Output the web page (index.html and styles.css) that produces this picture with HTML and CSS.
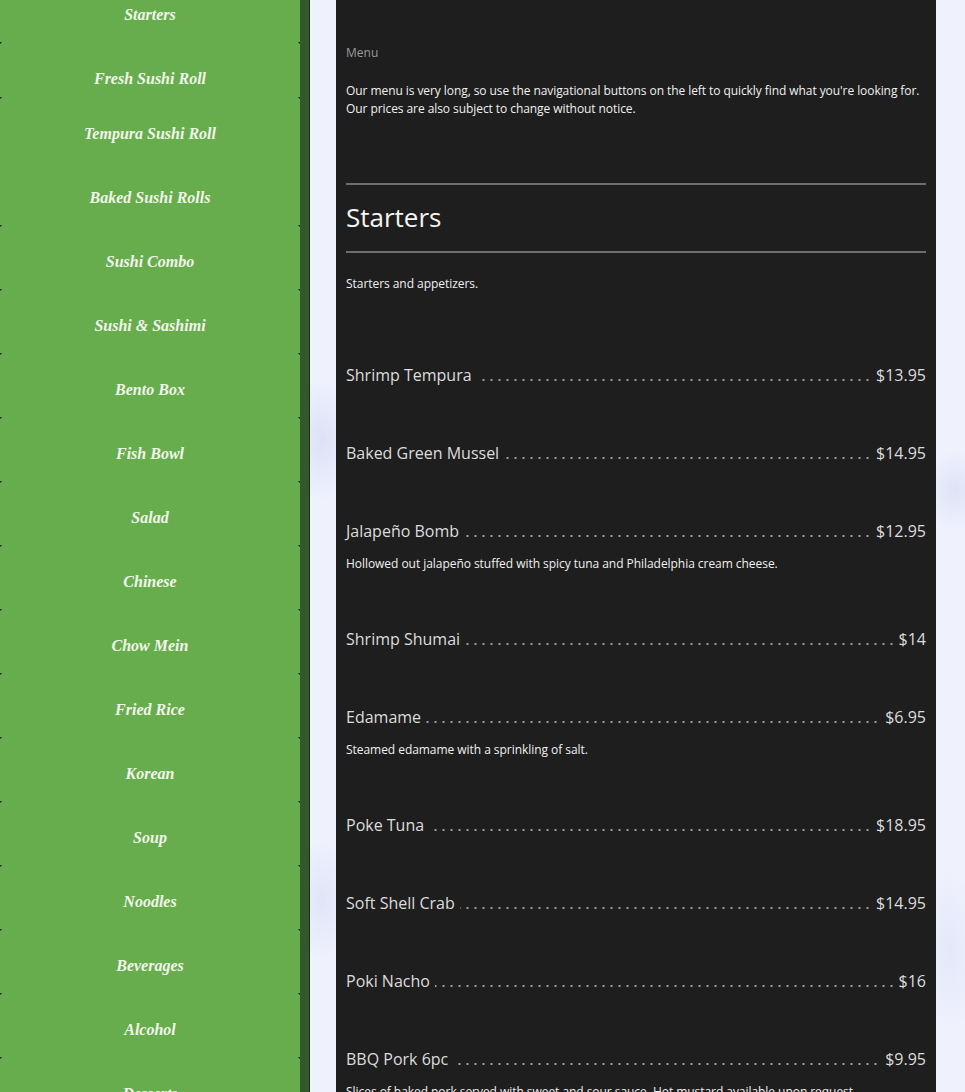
FILE: index.html
```html
<!DOCTYPE html>
<html lang="en">
<head>
<meta charset="utf-8">
<title>Menu</title>
<link rel="stylesheet" href="styles.css">
</head>
<body>
<div class="page">
  <nav class="sidebar">
    <a class="nav-item nav-first sep" href="#">Starters</a>
    <a class="nav-item nav-short sep" href="#">Fresh Sushi Roll</a>
    <a class="nav-item" href="#">Tempura Sushi Roll</a>
    <a class="nav-item sep" href="#">Baked Sushi Rolls</a>
    <a class="nav-item sep" href="#">Sushi Combo</a>
    <a class="nav-item sep" href="#">Sushi &amp; Sashimi</a>
    <a class="nav-item sep" href="#">Bento Box</a>
    <a class="nav-item sep" href="#">Fish Bowl</a>
    <a class="nav-item sep" href="#">Salad</a>
    <a class="nav-item sep" href="#">Chinese</a>
    <a class="nav-item sep" href="#">Chow Mein</a>
    <a class="nav-item sep" href="#">Fried Rice</a>
    <a class="nav-item sep" href="#">Korean</a>
    <a class="nav-item sep" href="#">Soup</a>
    <a class="nav-item sep" href="#">Noodles</a>
    <a class="nav-item sep" href="#">Beverages</a>
    <a class="nav-item sep" href="#">Alcohol</a>
    <a class="nav-item sep" href="#">Desserts</a>
  </nav>
  <div class="strip"></div>
  <main class="main">
    <section class="panel">
      <p class="crumb">Menu</p>
      <p class="intro">Our menu is very long, so use the navigational buttons on the left to quickly find what you're looking for.<br>Our prices are also subject to change without notice.</p>
      <hr class="rule rule-top">
      <h2 class="section-title">Starters</h2>
      <hr class="rule">
      <p class="section-desc">Starters and appetizers.</p>
      <div class="items">
        <div class="item">
          <div class="row"><span class="name">Shrimp Tempura</span><span class="price">$13.95</span></div>
        </div>
        <div class="item">
          <div class="row"><span class="name">Baked Green Mussel</span><span class="price">$14.95</span></div>
        </div>
        <div class="item">
          <div class="row"><span class="name">Jalapeño Bomb</span><span class="price">$12.95</span></div>
          <p class="desc">Hollowed out jalapeño stuffed with spicy tuna and Philadelphia cream cheese.</p>
        </div>
        <div class="item">
          <div class="row"><span class="name">Shrimp Shumai</span><span class="price">$14</span></div>
        </div>
        <div class="item">
          <div class="row"><span class="name">Edamame</span><span class="price">$6.95</span></div>
          <p class="desc">Steamed edamame with a sprinkling of salt.</p>
        </div>
        <div class="item">
          <div class="row"><span class="name">Poke Tuna</span><span class="price">$18.95</span></div>
        </div>
        <div class="item">
          <div class="row"><span class="name">Soft Shell Crab</span><span class="price">$14.95</span></div>
        </div>
        <div class="item">
          <div class="row"><span class="name">Poki Nacho</span><span class="price">$16</span></div>
        </div>
        <div class="item">
          <div class="row"><span class="name">BBQ Pork 6pc</span><span class="price">$9.95</span></div>
          <p class="desc">Slices of baked pork served with sweet and sour sauce. Hot mustard available upon request.</p>
        </div>
      </div>
    </section>
  </main>
</div>
</body>
</html>
```
FILE: styles.css
```css
html, body {
  margin: 0;
  padding: 0;
  height: 100%;
  overflow: hidden;
}

body {
  font-family: "Open Sans", "Noto Sans", sans-serif;
  background-color: #eff1fd;
  background-image:
    radial-gradient(ellipse 30px 60px at 322px 440px, rgba(205, 212, 240, 0.55), rgba(205, 212, 240, 0) 100%),
    radial-gradient(ellipse 30px 40px at 955px 490px, rgba(205, 212, 240, 0.5), rgba(205, 212, 240, 0) 100%),
    radial-gradient(ellipse 28px 60px at 322px 900px, rgba(210, 216, 242, 0.5), rgba(210, 216, 242, 0) 100%),
    radial-gradient(ellipse 30px 80px at 950px 950px, rgba(214, 220, 244, 0.45), rgba(214, 220, 244, 0) 100%);
  background-repeat: no-repeat;
}

.page {
  display: flex;
  height: 1092px;
}

/* ---------- sidebar ---------- */
.sidebar {
  width: 300px;
  flex: none;
  background: #67ad4d;
  display: flex;
  flex-direction: column;
}

.nav-item {
  display: block;
  box-sizing: border-box;
  height: 64px;
  padding-top: 23px;
  line-height: 20px;
  text-align: center;
  font-family: "Liberation Serif", "Times New Roman", serif;
  font-weight: bold;
  font-style: italic;
  font-size: 16px;
  color: #f1f6ea;
  text-decoration: none;
  flex: none;
}

.nav-item.sep {
  background-image:
    radial-gradient(circle at 0 0, #1d3516 1.4px, rgba(29, 53, 22, 0) 2px),
    radial-gradient(circle at 100% 0, #1d3516 1.4px, rgba(29, 53, 22, 0) 2px);
  background-repeat: no-repeat;
  background-size: 4px 4px, 4px 4px;
  background-position: 0 100%, 100% 100%;
}

.nav-first {
  height: 46px;
  padding-top: 5px;
}

.nav-short {
  height: 55px;
}

.strip {
  width: 9px;
  flex: none;
  background: #33582b;
  border-right: 1px solid #1b2d16;
}

/* ---------- main ---------- */
.main {
  flex: 1;
  padding-left: 26px;
}

.panel {
  width: 580px;
  padding: 44px 10px 0;
  background: #1e1e1e;
  height: 100%;
  box-sizing: content-box;
  color: #ececec;
}

.crumb {
  margin: 0;
  font-size: 12px;
  line-height: 18px;
  color: #9a9a9a;
}

.intro {
  margin: 20px 0 0;
  font-size: 12px;
  line-height: 18px;
  letter-spacing: -0.006em;
  color: #f0f0f0;
}

.rule {
  margin: 0;
  border: 0;
  height: 2px;
  background: #6e6e6e;
}

.rule-top {
  margin-top: 65px;
}

.section-title {
  margin: 14px 0 16px;
  font-weight: normal;
  font-size: 26px;
  line-height: 36px;
  color: #f4f4f4;
}

.section-desc {
  margin: 22px 0 0;
  font-size: 12px;
  line-height: 18px;
  letter-spacing: -0.004em;
  color: #f0f0f0;
}

.items {
  margin-top: 70px;
  display: flex;
  flex-direction: column;
  gap: 54px;
}

.row {
  display: flex;
  height: 24px;
  line-height: 24px;
  font-size: 16px;
  color: #dcdcdc;
  background-image: radial-gradient(circle, #a0a0a0 0.7px, rgba(160, 160, 160, 0) 1.1px);
  background-size: 8px 4px;
  background-repeat: repeat-x;
  background-position: -2.5px 15px;
}

.name {
  background: #1e1e1e;
  padding-right: 5px;
  white-space: nowrap;
}

.price {
  margin-left: auto;
  background: #1e1e1e;
  padding-left: 5px;
  white-space: nowrap;
}

.desc {
  margin: 12px 0 0;
  font-size: 12px;
  line-height: 18px;
  letter-spacing: -0.004em;
  color: #f0f0f0;
}
```
